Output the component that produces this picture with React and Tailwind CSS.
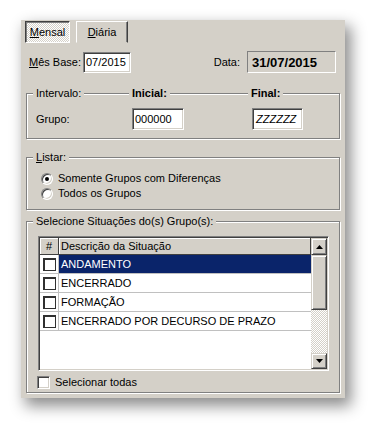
const SUNKEN =
  "border border-t-[#808080] border-l-[#808080] border-r-white border-b-white shadow-[inset_1px_1px_0_#404040,inset_-1px_-1px_0_#d4d0c8]";
const RAISED =
  "border border-t-[#d4d0c8] border-l-[#d4d0c8] border-r-[#404040] border-b-[#404040] shadow-[inset_1px_1px_0_#fff,inset_-1px_-1px_0_#808080] bg-[#d4d0c8]";
const GROUP =
  "relative ml-[5px] w-[314px] border border-[#808080] shadow-[inset_1px_1px_0_#fff,1px_1px_0_#fff]";
const LEGEND = "absolute -top-[7px] px-[3px] bg-[#d4d0c8] whitespace-nowrap";
const CHECKER =
  "bg-[repeating-conic-gradient(#ffffff_0%_25%,#d4d0c8_0%_50%)] bg-[length:2px_2px]";

function Radio({ checked, label }) {
  return (
    <div className="h-[15px] flex items-center gap-[5px]">
      <div className="w-[12px] h-[12px] rounded-full bg-white border border-t-[#808080] border-l-[#808080] border-r-white border-b-white shadow-[inset_1px_1px_0_#404040,inset_-1px_-1px_0_#d4d0c8] flex items-center justify-center">
        {checked && <div className="w-[4px] h-[4px] rounded-full bg-black" />}
      </div>
      <span>{label}</span>
    </div>
  );
}

function Row({ text, selected }) {
  return (
    <div className="h-[19px] flex border-b border-[#c0c0c0]">
      <div className="w-[19px] border-r border-[#c0c0c0] bg-white flex items-center justify-center">
        <div className="w-[13px] h-[13px] bg-white border border-[#303030] shadow-[inset_1px_1px_0_#303030]" />
      </div>
      <div
        className={
          selected
            ? "flex-1 pl-[2px] flex items-center bg-[#0a246a] text-white whitespace-nowrap"
            : "flex-1 pl-[2px] flex items-center whitespace-nowrap"
        }
      >
        {text}
      </div>
    </div>
  );
}

function Arrow({ up }) {
  return (
    <svg width="7" height="4" viewBox="0 0 7 4">
      {up ? <polygon points="3.5,0 7,4 0,4" fill="#000" /> : <polygon points="0,0 7,0 3.5,4" fill="#000" />}
    </svg>
  );
}

export default function App() {
  return (
    <div className="min-h-screen bg-white pt-[20px] pl-[21px] font-['Liberation_Sans',Arial,sans-serif] text-[11px] leading-[13px] text-black">
      <div className="w-[324px] h-[378px] bg-[#d4d0c8] shadow-[5px_7px_14px_1px_rgba(0,0,0,0.45)] flex flex-col">
        {/* tabs */}
        <div className="flex gap-[6px] pl-[4px] pt-[1px]">
          <div
            className={
              "w-[45px] h-[22px] flex items-center justify-center border border-t-[#404040] border-l-[#404040] border-r-white border-b-white shadow-[inset_1px_1px_0_#808080] " +
              CHECKER
            }
          >
            <span>
              <span className="underline underline-offset-[1px]">M</span>ensal
            </span>
          </div>
          <div className="w-[52px] h-[22px] flex items-center justify-center border border-t-white border-l-white border-r-[#404040] border-b-[#d4d0c8] shadow-[inset_-1px_0_0_#808080]">
            <span>
              <span className="underline underline-offset-[1px]">D</span>iária
            </span>
          </div>
        </div>

        {/* Mês base row */}
        <div className="mt-[8px] flex items-center h-[22px]">
          <span className="ml-[8px] w-[54px] whitespace-nowrap">
            <span className="underline underline-offset-[1px]">M</span>ês Base:
          </span>
          <div className={"w-[48px] h-[21px] bg-white flex items-center pl-[2px] " + SUNKEN}>07/2015</div>
          <span className="ml-auto mr-[7px]">Data:</span>
          <div className="w-[89px] h-[22px] mr-[9px] border border-t-[#808080] border-l-[#808080] border-r-white border-b-white flex items-center pl-[4px] font-bold text-[13px]">
            31/07/2015
          </div>
        </div>

        {/* Intervalo */}
        <div className={GROUP + " mt-[20px] h-[46px] flex items-start pt-[14px] pl-[9px]"}>
          <span className={LEGEND + " left-[6px]"}>Intervalo:</span>
          <span className={LEGEND + " left-[102px] font-bold"}>Inicial:</span>
          <span className={LEGEND + " left-[221px] font-bold"}>Final:</span>
          <span className="w-[96px] h-[22px] flex items-center">Grupo:</span>
          <div className={"w-[52px] h-[22px] bg-white flex items-center pl-[2px] " + SUNKEN}>000000</div>
          <div className={"ml-[68px] w-[51px] h-[22px] bg-white flex items-center pl-[3px] italic " + SUNKEN}>
            ZZZZZZ
          </div>
        </div>

        {/* Listar */}
        <div className={GROUP + " mt-[18px] h-[53px] flex flex-col pt-[13px] pl-[14px]"}>
          <span className={LEGEND + " left-[6px]"}>
            <span className="underline underline-offset-[1px]">L</span>istar:
          </span>
          <Radio checked label="Somente Grupos com Diferenças" />
          <Radio label="Todos os Grupos" />
        </div>

        {/* Selecione */}
        <div className={GROUP + " mt-[11px] h-[172px] flex flex-col pt-[14px] pl-[11px]"}>
          <span className={LEGEND + " left-[6px]"}>Selecione Situações do(s) Grupo(s):</span>
          <div className={"w-[291px] h-[135px] p-[1px] flex " + SUNKEN}>
            <div className="flex-1 bg-white flex flex-col">
              <div className="h-[17px] flex">
                <div className="w-[19px] bg-[#d4d0c8] border-r border-b border-[#404040] shadow-[inset_1px_1px_0_#fff] flex items-center justify-center">
                  #
                </div>
                <div className="flex-1 bg-[#d4d0c8] border-r border-b border-[#404040] shadow-[inset_1px_1px_0_#fff] flex items-center pl-[2px]">
                  Descrição da Situação
                </div>
              </div>
              <Row text="ANDAMENTO" selected />
              <Row text="ENCERRADO" />
              <Row text="FORMAÇÃO" />
              <Row text="ENCERRADO POR DECURSO DE PRAZO" />
            </div>
            <div className="w-[16px] flex flex-col">
              <div className={"h-[17px] flex items-center justify-center " + RAISED}>
                <Arrow up />
              </div>
              <div className={"h-[55px] " + RAISED} />
              <div className={"flex-1 " + CHECKER} />
              <div className={"h-[16px] flex items-center justify-center " + RAISED}>
                <Arrow />
              </div>
            </div>
          </div>
          <div className="mt-[5px] -ml-[1px] flex items-center gap-[5px]">
            <div className={"w-[13px] h-[13px] bg-white " + SUNKEN} />
            <span>Selecionar todas</span>
          </div>
        </div>
      </div>
    </div>
  );
}
